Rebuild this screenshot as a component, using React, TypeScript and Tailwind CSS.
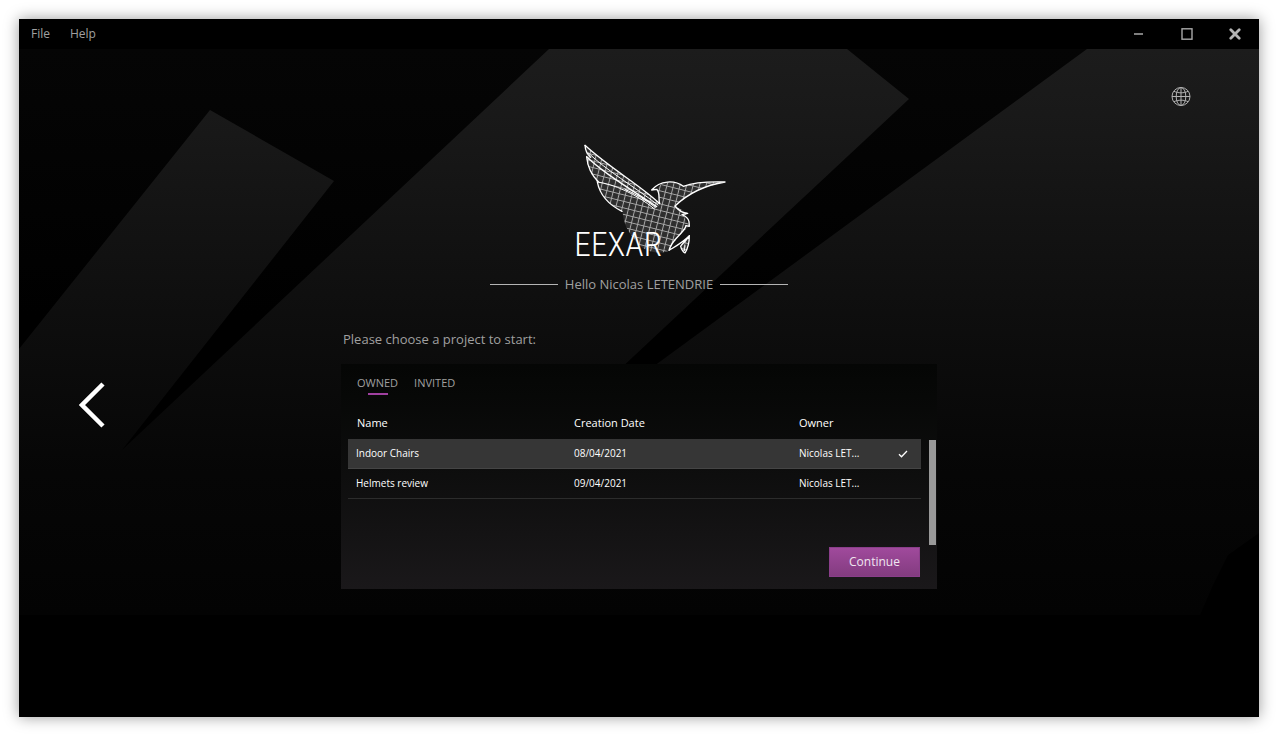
import { useState } from 'react'

const projects = [
    { name: 'Indoor Chairs', date: '08/04/2021', owner: 'Nicolas LET...' },
    { name: 'Helmets review', date: '09/04/2021', owner: 'Nicolas LET...' },
]

const tabs = ['OWNED', 'INVITED']

const Backdrop = () => {
    return (
        <svg className="absolute inset-0 h-full w-full" viewBox="0 0 1240 668" preserveAspectRatio="xMidYMin slice" aria-hidden="true">
            <defs>
                <linearGradient id="shade" gradientUnits="userSpaceOnUse" x1="0" y1="0" x2="0" y2="566">
                    <stop offset="0" stopColor="#1c1c1c" />
                    <stop offset="0.15" stopColor="#181818" />
                    <stop offset="0.3" stopColor="#131313" />
                    <stop offset="0.5" stopColor="#0d0d0d" />
                    <stop offset="0.75" stopColor="#060606" />
                    <stop offset="1" stopColor="#030303" />
                </linearGradient>
                <linearGradient id="sky" x1="0" y1="0" x2="0" y2="1">
                    <stop offset="0" stopColor="#050505" />
                    <stop offset="0.4" stopColor="#000000" />
                </linearGradient>
            </defs>
            <rect width="1240" height="668" fill="url(#sky)" />
            <path
                d="M0 300 L191 61 L315 132 L103 401 L530 0 H828 L890 50 L493 421 L1068 0 H1240 V484 L1209 506 L1194 536 L1181 566 H0 Z"
                fill="url(#shade)"
            />
        </svg>
    )
}

const Logo = () => {
    return (
        <svg className="h-[112px] w-[174px] overflow-visible" viewBox="-24 42 522 336" role="img" aria-label="EEXAR">
            <defs>
                <pattern id="mesh" width="19" height="19" patternUnits="userSpaceOnUse" patternTransform="rotate(14)">
                    <rect width="19" height="19" fill="#2e2e2e" />
                    <path d="M0 9.5 H19 M9.5 0 V19" stroke="#a8a8a8" strokeWidth="3" />
                </pattern>
            </defs>
            <g fill="url(#mesh)">
                <path d="M80 83 L75 46 C150 115 240 165 298 220 L296 195 L290 178 C305 152 345 150 370 169 C410 156 460 155 495 156 C440 168 390 185 345 228 L383 250 L372 258 L388 288 C376 300 345 325 328 362 C285 378 240 358 222 326 C200 300 190 275 188 246 C152 226 122 198 112 157 C92 134 82 112 80 83 Z" />
                <path d="M388 317 C378 332 368 338 362 347 C364 354 368 364 375 369 C386 354 388 338 388 317 Z" />
            </g>
            <g fill="none" stroke="#ffffff" strokeWidth="4" strokeLinejoin="round" strokeLinecap="round">
                <path d="M75 46 C150 115 240 165 298 220" />
                <path d="M75 46 C76 62 82 74 92 82 M80 81 C83 112 95 136 115 155" />
                <path d="M84 68 C140 122 220 168 294 225" strokeWidth="3" />
                <path d="M80 80 C130 128 200 170 290 230" />
                <path d="M112 156 C160 162 230 192 282 236 M195 178 C225 190 260 212 286 232" strokeWidth="3" />
                <path d="M186 244 C150 226 120 198 112 156" />
                <path d="M299 221 C294 206 302 190 290 178 L275 180 C300 150 345 150 370 169 C410 154 460 155 495 156 C440 165 390 185 345 228 C356 242 368 249 383 250 L366 254 C376 258 385 266 387 275 L388 289 L378 287" />
                <path d="M378 287 C376 306 334 328 327 361 C348 348 370 336 388 317 C380 332 366 340 362 349 C364 357 368 365 375 369 C384 354 388 338 388 317" />
                <path d="M375 347 L373 362" strokeWidth="3" />
            </g>
            <text x="43" y="377" fill="#ffffff" fontSize="100" className="font-light [font-family:'Roboto_Condensed','Roboto',sans-serif]">
                EEXAR
            </text>
        </svg>
    )
}

const TitleBar = () => {
    return (
        <header className="flex h-[30px] shrink-0 items-center justify-between bg-black text-xs text-[#a0a0a0]">
            <nav className="flex gap-5 pl-3">
                <button type="button">File</button>
                <button type="button">Help</button>
            </nav>
            <div className="flex items-center gap-9 pr-[18px]">
                <button type="button" aria-label="Minimize">
                    <svg width="12" height="12" viewBox="0 0 12 12">
                        <path d="M1 6 H10" stroke="#a8a8a8" strokeWidth="1.5" />
                    </svg>
                </button>
                <button type="button" aria-label="Maximize">
                    <svg width="12" height="12" viewBox="0 0 12 12">
                        <rect x="1" y="0.8" width="10" height="10.4" fill="none" stroke="#a8a8a8" strokeWidth="1.4" />
                    </svg>
                </button>
                <button type="button" aria-label="Close">
                    <svg width="12" height="12" viewBox="0 0 12 12">
                        <path d="M1.8 1.8 L10.2 10.2 M10.2 1.8 L1.8 10.2" stroke="#b4b4b4" strokeWidth="2.8" strokeLinecap="round" />
                    </svg>
                </button>
            </div>
        </header>
    )
}

const ProjectPanel = () => {
    const [tab, setTab] = useState(tabs[0])
    const [selected, setSelected] = useState(0)

    return (
        <section className="flex min-h-[225px] flex-col bg-linear-to-b from-[#050605] via-[#0e0e0e] to-[#1a181a]">
            <div className="flex h-[43px] gap-4 pt-[10px] pl-4 text-[11px] leading-[18px] text-[#a0a0a0]">
                {tabs.map((label) => (
                    <button key={label} type="button" onClick={() => setTab(label)} className="flex flex-col items-center">
                        {label}
                        {tab === label && <span className="mt-px h-[2px] w-5 bg-[#a040a0]" />}
                    </button>
                ))}
            </div>
            <div className="flex gap-2 pr-px pl-[7px]">
                <table className="flex-1 table-fixed border-separate border-spacing-0 text-left text-white">
                    <colgroup>
                        <col className="w-[218px]" />
                        <col className="w-[225px]" />
                        <col />
                        <col className="w-[37px]" />
                    </colgroup>
                    <thead>
                        <tr className="h-8 text-[11px]">
                            <th className="pl-[9px] font-normal">Name</th>
                            <th className="pl-2 font-normal">Creation Date</th>
                            <th className="pl-2 font-normal">Owner</th>
                            <th aria-label="Selected" />
                        </tr>
                    </thead>
                    <tbody>
                        {projects.map((project, index) => (
                            <tr
                                key={project.name}
                                onClick={() => setSelected(index)}
                                className={`h-[30px] text-[10px] *:border-b *:pl-2 ${selected === index ? 'bg-[#363636] *:border-[#454545]' : '*:border-[#2c2c2c]'}`}
                            >
                                <td>{project.name}</td>
                                <td>{project.date}</td>
                                <td>{project.owner}</td>
                                <td>
                                    {selected === index && (
                                        <svg className="ml-[5px]" width="12" height="10" viewBox="0 0 12 10" fill="none">
                                            <path d="M2 5.2 L4.5 7.8 L10 2" stroke="#ffffff" strokeWidth="1.3" />
                                        </svg>
                                    )}
                                </td>
                            </tr>
                        ))}
                    </tbody>
                </table>
                <div className="-mb-12 mt-[33px] h-[105px] w-[7px] bg-[#999999]" />
            </div>
            <button
                type="button"
                className="mt-auto mr-[17px] mb-3 h-[30px] w-[91px] self-end border border-[#8a3e8a] bg-linear-to-b from-[#a04a9c] to-[#833c80] text-xs text-[#f0e6f0]"
            >
                Continue
            </button>
        </section>
    )
}

const App = () => {
    return (
        <div className="flex min-h-screen bg-white p-[19px] [font-family:'Open_Sans','Noto_Sans',sans-serif]">
            <div className="flex flex-1 flex-col bg-black shadow-[0_0_14px_rgba(0,0,0,0.4)]">
                <TitleBar />
                <main className="relative flex-1">
                    <Backdrop />
                    <div className="relative grid grid-cols-[1fr_596px_1fr]">
                        <div className="pt-[333px] pl-[60px]">
                            <button type="button" aria-label="Back" className="block">
                                <svg width="26" height="46" viewBox="0 0 26 46" fill="none">
                                    <path d="M24 2 L3 23 L24 44" stroke="#ffffff" strokeWidth="4.5" />
                                </svg>
                            </button>
                        </div>
                        <div className="flex flex-col pt-[95px]">
                            <div className="flex justify-center">
                                <Logo />
                            </div>
                            <div className="mt-[18px] flex items-center justify-center gap-[7px]">
                                <span className="h-px w-[68px] bg-[#b4b4b4]" />
                                <p className="text-[13px] leading-5 text-[#a0a0a0]">Hello Nicolas LETENDRIE</p>
                                <span className="h-px w-[68px] bg-[#b4b4b4]" />
                            </div>
                            <h1 className="mt-[35px] mb-[15px] pl-[2px] text-[13px] leading-5 text-[#a0a0a0]">Please choose a project to start:</h1>
                            <ProjectPanel />
                        </div>
                        <div className="flex items-start justify-end pt-[38px] pr-[68px]">
                            <button type="button" aria-label="Language">
                                <svg width="20" height="20" viewBox="0 0 20 20" fill="none" stroke="#b0b0b0" strokeWidth="1">
                                    <circle cx="10" cy="9.5" r="9" />
                                    <ellipse cx="10" cy="9.5" rx="4.8" ry="9" />
                                    <path d="M10 0.5 V18.5 M1 9.5 H19 M3 4.3 C7 6.3 13 6.3 17 4.3 M3 14.7 C7 12.7 13 12.7 17 14.7" />
                                </svg>
                            </button>
                        </div>
                    </div>
                </main>
            </div>
        </div>
    )
}

export default App
